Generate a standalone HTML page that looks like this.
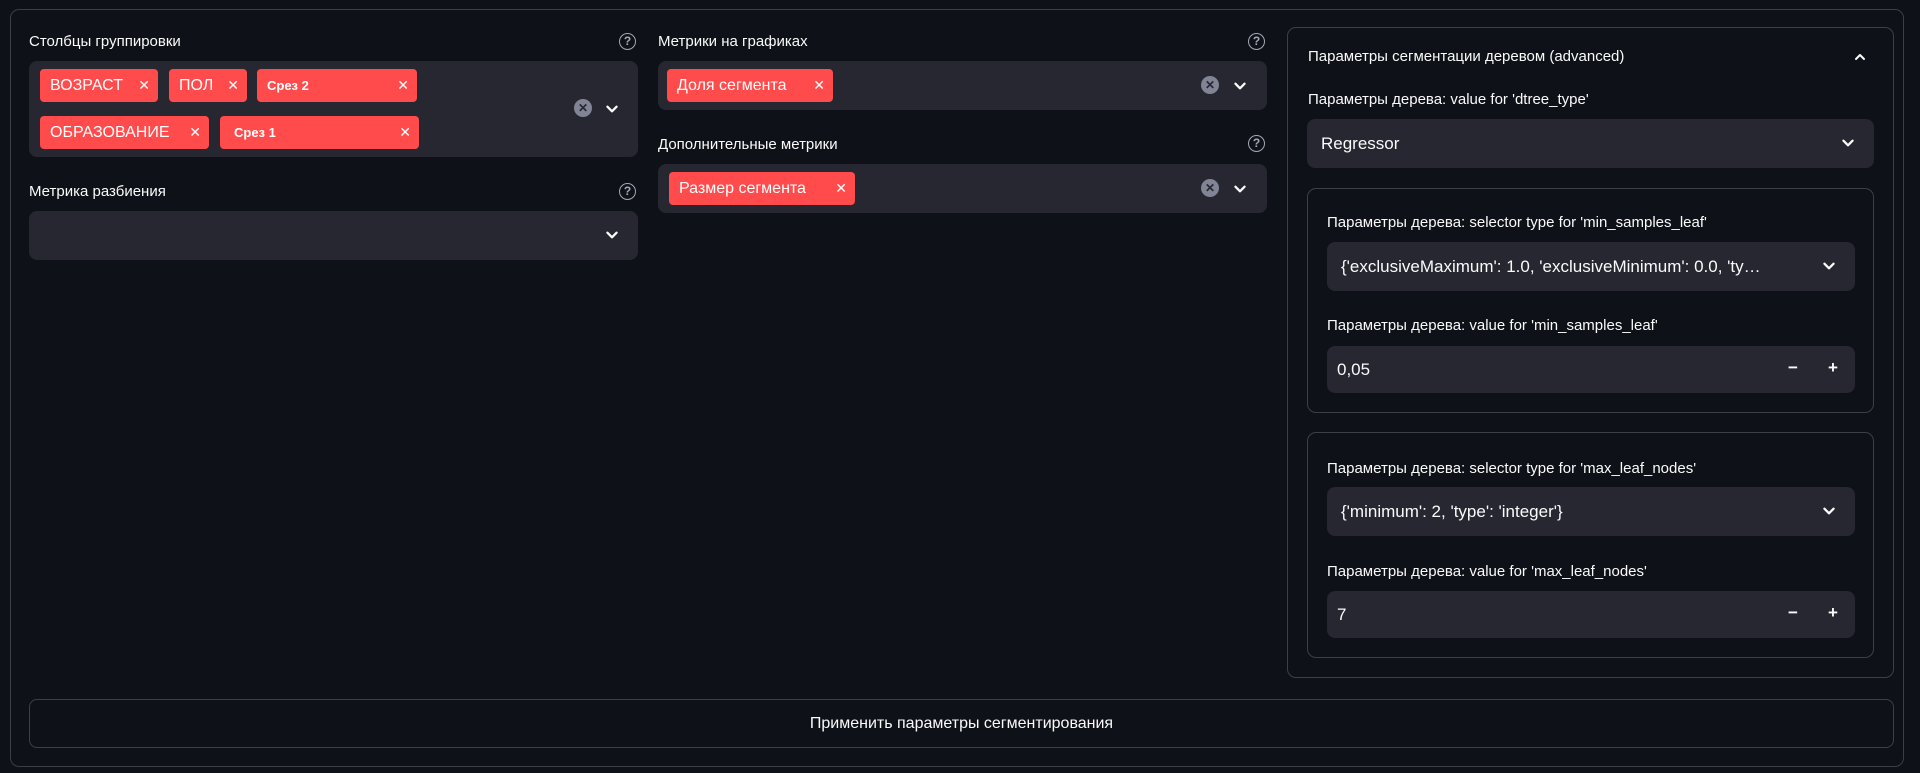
<!DOCTYPE html>
<html><head><meta charset="utf-8"><style>
*{box-sizing:border-box;margin:0;padding:0}
body{width:1920px;height:773px;background:#0e1117;color:#fafafa;font-family:"Liberation Sans",sans-serif;position:relative;overflow:hidden}
.a{position:absolute}
.outer{left:10px;top:9px;width:1894px;height:758px;border:1px solid rgba(250,250,250,0.2);border-radius:9px}
.lbl{font-size:15px;color:#fafafa;white-space:nowrap}
.box{background:#262730;border-radius:8px}
.tag{background:#ff4b4b;border-radius:4px;color:#fff;font-size:16px;display:flex;align-items:center;padding-left:10px;height:33px}
.tag .x{position:absolute;right:8px;font-size:14px;top:8px}
.tag.b{font-size:13px;font-weight:bold}
.help{width:17px;height:17px;border:1.5px solid #a3a8b8;border-radius:50%;font-size:12px;color:#a3a8b8;text-align:center;line-height:14px;font-weight:bold}
.clr{width:18px;height:18px;border-radius:50%;background:#808495;color:#262730;font-size:12px;text-align:center;line-height:18px;font-weight:bold}
.bord{border:1px solid rgba(250,250,250,0.2);border-radius:9px}
.val{font-size:17px;color:#fafafa}
</style></head><body>
<div class="a outer"></div>
<svg width="0" height="0" style="position:absolute"><defs><symbol id="chev" viewBox="0 0 14 14"><path d="M3 5l4 4 4-4" fill="none" stroke="#fafafa" stroke-width="2" stroke-linecap="round" stroke-linejoin="round"/></symbol></defs></svg>

<!-- Column 1 -->
<div class="a lbl" style="left:29px;top:33px">Столбцы группировки</div>
<div class="a help" style="left:619px;top:33px">?</div>
<div class="a box" style="left:29px;top:61px;width:609px;height:96px"></div>
<div class="a tag" style="left:40px;top:69px;width:118px">ВОЗРАСТ<span class="x">✕</span></div>
<div class="a tag" style="left:169px;top:69px;width:78px">ПОЛ<span class="x">✕</span></div>
<div class="a tag b" style="left:257px;top:69px;width:160px">Срез 2<span class="x" style="font-weight:normal">✕</span></div>
<div class="a tag" style="left:40px;top:116px;width:169px">ОБРАЗОВАНИЕ<span class="x">✕</span></div>
<div class="a tag b" style="left:220px;top:116px;width:199px;padding-left:14px">Срез 1<span class="x" style="font-weight:normal">✕</span></div>
<div class="a clr" style="left:574px;top:99px">✕</div>
<svg class="a" style="left:604px;top:101px" width="16" height="16"><use href="#chev"/></svg>

<div class="a lbl" style="left:29px;top:183px">Метрика разбиения</div>
<div class="a help" style="left:619px;top:183px">?</div>
<div class="a box" style="left:29px;top:211px;width:609px;height:49px"></div>
<svg class="a" style="left:604px;top:227px" width="16" height="16"><use href="#chev"/></svg>

<!-- Column 2 -->
<div class="a lbl" style="left:658px;top:33px">Метрики на графиках</div>
<div class="a help" style="left:1248px;top:33px">?</div>
<div class="a box" style="left:658px;top:61px;width:609px;height:49px"></div>
<div class="a tag" style="left:667px;top:69px;width:166px">Доля сегмента<span class="x">✕</span></div>
<div class="a clr" style="left:1201px;top:76px">✕</div>
<svg class="a" style="left:1232px;top:78px" width="16" height="16"><use href="#chev"/></svg>

<div class="a lbl" style="left:658px;top:136px">Дополнительные метрики</div>
<div class="a help" style="left:1248px;top:135px">?</div>
<div class="a box" style="left:658px;top:164px;width:609px;height:49px"></div>
<div class="a tag" style="left:669px;top:172px;width:186px">Размер сегмента<span class="x">✕</span></div>
<div class="a clr" style="left:1201px;top:179px">✕</div>
<svg class="a" style="left:1232px;top:181px" width="16" height="16"><use href="#chev"/></svg>

<!-- Column 3 -->
<div class="a bord" style="left:1287px;top:27px;width:607px;height:651px"></div>
<div class="a lbl" style="left:1308px;top:48px">Параметры сегментации деревом (advanced)</div>
<svg class="a" style="left:1852px;top:49px" width="16" height="16"><path d="M4 10l4-4 4 4" fill="none" stroke="#fafafa" stroke-width="2" stroke-linecap="round" stroke-linejoin="round"/></svg>
<div class="a lbl" style="left:1308px;top:91px">Параметры дерева: value for 'dtree_type'</div>
<div class="a box" style="left:1307px;top:119px;width:567px;height:49px"></div>
<div class="a val" style="left:1321px;top:134px">Regressor</div>
<svg class="a" style="left:1840px;top:135px" width="16" height="16"><use href="#chev"/></svg>

<div class="a bord" style="left:1307px;top:188px;width:567px;height:225px"></div>
<div class="a lbl" style="left:1327px;top:214px">Параметры дерева: selector type for 'min_samples_leaf'</div>
<div class="a box" style="left:1327px;top:242px;width:528px;height:49px"></div>
<div class="a val" style="left:1341px;top:257px">{'exclusiveMaximum': 1.0, 'exclusiveMinimum': 0.0, 'ty…</div>
<svg class="a" style="left:1821px;top:258px" width="16" height="16"><use href="#chev"/></svg>
<div class="a lbl" style="left:1327px;top:317px">Параметры дерева: value for 'min_samples_leaf'</div>
<div class="a box" style="left:1327px;top:346px;width:528px;height:47px"></div>
<div class="a val" style="left:1337px;top:360px">0,05</div>
<div class="a val" style="left:1788px;top:358px;font-weight:bold">−</div>
<div class="a val" style="left:1828px;top:358px;font-weight:bold">+</div>

<div class="a bord" style="left:1307px;top:432px;width:567px;height:226px"></div>
<div class="a lbl" style="left:1327px;top:460px">Параметры дерева: selector type for 'max_leaf_nodes'</div>
<div class="a box" style="left:1327px;top:487px;width:528px;height:49px"></div>
<div class="a val" style="left:1341px;top:502px">{'minimum': 2, 'type': 'integer'}</div>
<svg class="a" style="left:1821px;top:503px" width="16" height="16"><use href="#chev"/></svg>
<div class="a lbl" style="left:1327px;top:563px">Параметры дерева: value for 'max_leaf_nodes'</div>
<div class="a box" style="left:1327px;top:591px;width:528px;height:47px"></div>
<div class="a val" style="left:1337px;top:605px">7</div>
<div class="a val" style="left:1788px;top:603px;font-weight:bold">−</div>
<div class="a val" style="left:1828px;top:603px;font-weight:bold">+</div>

<!-- Button -->
<div class="a bord" style="left:29px;top:699px;width:1865px;height:49px;border-radius:8px;display:flex;align-items:center;justify-content:center;font-size:16px">Применить параметры сегментирования</div>
</body></html>
